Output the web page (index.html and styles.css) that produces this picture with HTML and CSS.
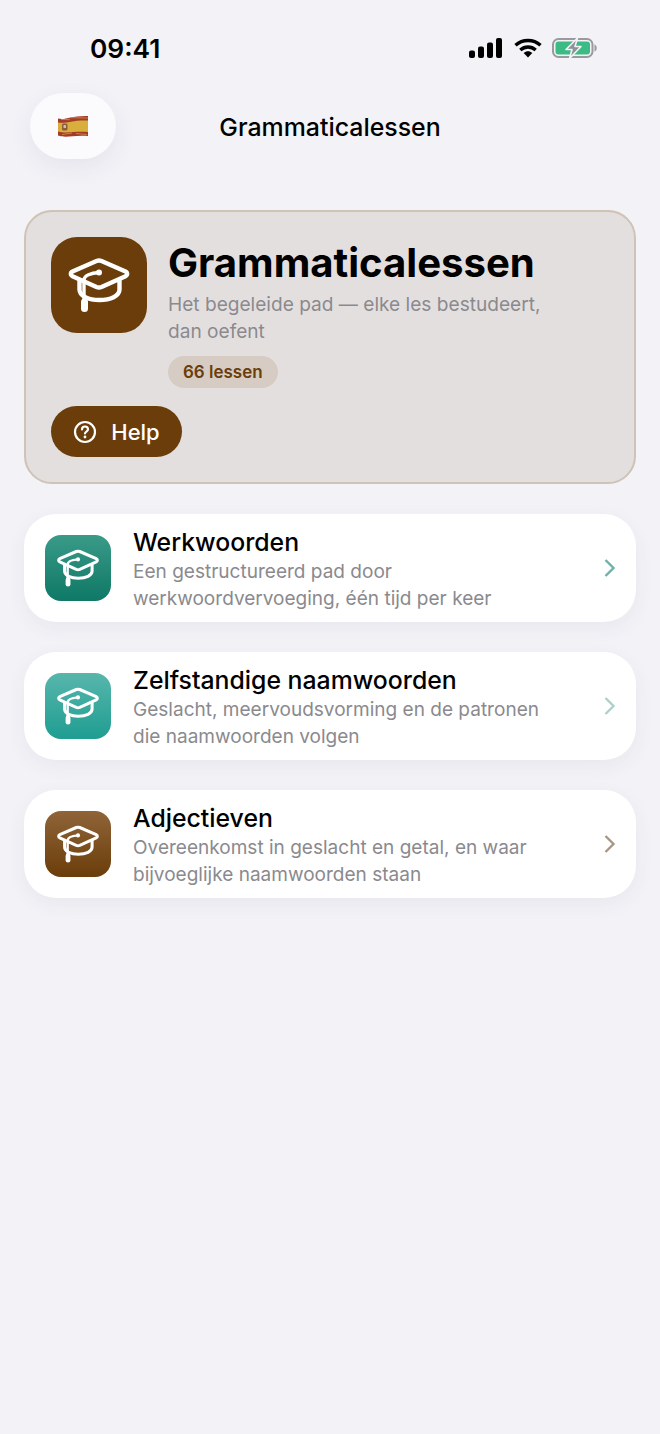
FILE: index.html
```html
<!DOCTYPE html>
<html lang="nl">
<head>
<meta charset="utf-8">
<title>Grammaticalessen</title>
<link rel="stylesheet" href="styles.css">
</head>
<body>
<svg class="defs" width="0" height="0" aria-hidden="true">
  <symbol id="cap" viewBox="0 0 96 96">
    <path d="M45.500 24 21.500 34.500c-2.200 1-2.200 3.700 0 4.700L45.500 50c1.700.7 3.300.7 5 0l24-10.800c2.200-1 2.200-3.700 0-4.700L50.500 24c-1.700-.7-3.300-.7-5 0Z" fill="none" stroke="#fff" stroke-width="4.400" stroke-linejoin="round"/>
    <path d="M28.500 43v9.500c0 6.500 9 10.500 20 10.500s20-4 20-10.500V43" fill="none" stroke="#fff" stroke-width="4.400" stroke-linecap="round"/>
    <path d="M48 35.500c-8 .5-15 3-15 7.500v22" fill="none" stroke="#fff" stroke-width="3.400" stroke-linecap="round"/>
    <circle cx="48" cy="35.500" r="3" fill="#fff"/>
    <path d="M33.500 65v6.500" stroke="#fff" stroke-width="7" stroke-linecap="round"/>
  </symbol>
</svg>

<div class="status">
  <span class="time">09:41</span>
  <div class="status-icons">
    <svg class="sig" width="34" height="20" viewBox="0 0 34 20"><rect x="0" y="12.500" width="6" height="7.500" rx="2"/><rect x="9" y="8.500" width="6" height="11.500" rx="2"/><rect x="18" y="4.500" width="6" height="15.500" rx="2"/><rect x="27" y="0" width="6" height="20" rx="2"/></svg>
    <svg class="wifi" width="28" height="20" viewBox="0 0 28 20"><path d="M1.500 7.300C8.500.9 19.500.9 26.500 7.300" fill="none" stroke="#000" stroke-width="3.400"/><path d="M6.300 12c4.600-4 10.800-4 15.400 0" fill="none" stroke="#000" stroke-width="3.400"/><path d="M9.700 15c2.800-2.200 5.800-2.200 8.600 0L14 19.500Z" fill="#000"/></svg>
    <svg class="batt" width="45" height="22" viewBox="0 0 45 22"><rect x="1" y="2" width="39.500" height="18" rx="5.500" fill="none" stroke="#9a9a9e" stroke-width="2"/><rect x="3.500" y="4.500" width="34.500" height="13" rx="3" fill="#3dbb84"/><path d="M42.500 7.500c1.500.5 2.200 2 2.200 3.500s-.7 3-2.200 3.500Z" fill="#9a9a9e"/><path d="M25.500 1 14 12.500h6L17.500 21.500 29 9.500h-6Z" fill="#8f9298" stroke="#f2f2f7" stroke-width="1.600" stroke-linejoin="round"/></svg>
  </div>
</div>

<header class="nav">
  <button class="flag-btn" aria-label="Spaans">
    <svg width="30" height="22" viewBox="0 0 30 22">
      <path d="M0 3.500C8 5.500 12 .5 30 1v20C16 19.500 9 23.500 0 20.500Z" fill="#a33b26"/>
      <path d="M0 7.500C8 9 13 5 30 5.500v11.500C16 16 9 19 0 16.500Z" fill="#d8ae3c"/>
      <path d="M12 2.700 30 3M3 4.500l9 .2M4 19.500l10-1.500M18 18.500l11 1" stroke="#c98a4a" stroke-width=".9" fill="none"/>
      <rect x="4" y="8.500" width="5.500" height="7" rx="1.500" fill="#8d5a3c"/>
      <rect x="5.500" y="10" width="2.500" height="3" fill="#c4c0b8"/>
    </svg>
  </button>
  <h1 class="nav-title">Grammaticalessen</h1>
</header>

<section class="hero">
  <div class="hero-top">
    <div class="hero-icon"><svg width="96" height="96"><use href="#cap"/></svg></div>
    <div class="hero-text">
      <h2 class="hero-title">Grammaticalessen</h2>
      <p class="hero-sub">Het begeleide pad — elke les bestudeert, dan oefent</p>
      <span class="badge">66 lessen</span>
    </div>
  </div>
  <button class="help">
    <svg width="24" height="24" viewBox="0 0 24 24"><circle cx="12" cy="12" r="10" fill="none" stroke="#fff" stroke-width="2.200"/><path d="M9 9.500c0-1.800 1.300-3 3-3s3 1.200 3 2.800c0 2.200-3 2.300-3 4.200" fill="none" stroke="#fff" stroke-width="2.200" stroke-linecap="round"/><circle cx="12" cy="17" r="1.400" fill="#fff"/></svg>
    <span>Help</span>
  </button>
</section>

<main class="list">
  <article class="row">
    <div class="row-icon teal"><svg width="66" height="66"><use href="#cap"/></svg></div>
    <div class="row-text">
      <h3 class="row-title">Werkwoorden</h3>
      <p class="row-sub">Een gestructureerd pad door werkwoordvervoeging, één tijd per keer</p>
    </div>
    <svg class="chev" width="12" height="20" viewBox="0 0 12 20"><path d="M1.500 2l8 8-8 8" fill="none" stroke="#6fb0a8" stroke-width="2.400"/></svg>
  </article>
  <article class="row">
    <div class="row-icon aqua"><svg width="66" height="66"><use href="#cap"/></svg></div>
    <div class="row-text">
      <h3 class="row-title">Zelfstandige naamwoorden</h3>
      <p class="row-sub">Geslacht, meervoudsvorming en de patronen die naamwoorden volgen</p>
    </div>
    <svg class="chev" width="12" height="20" viewBox="0 0 12 20"><path d="M1.500 2l8 8-8 8" fill="none" stroke="#aed0ca" stroke-width="2.400"/></svg>
  </article>
  <article class="row">
    <div class="row-icon brown"><svg width="66" height="66"><use href="#cap"/></svg></div>
    <div class="row-text">
      <h3 class="row-title">Adjectieven</h3>
      <p class="row-sub">Overeenkomst in geslacht en getal, en waar bijvoeglijke naamwoorden staan</p>
    </div>
    <svg class="chev" width="12" height="20" viewBox="0 0 12 20"><path d="M1.500 2l8 8-8 8" fill="none" stroke="#a99684" stroke-width="2.400"/></svg>
  </article>
</main>
</body>
</html>
```
FILE: styles.css
```css
* { box-sizing: border-box; }
html, body { margin: 0; padding: 0; }
body {
  width: 660px;
  height: 1434px;
  overflow: hidden;
  background: #f2f2f7;
  font-family: Inter, "Liberation Sans", sans-serif;
  color: #000;
}
.defs { position: absolute; }
h1, h2, h3, p { margin: 0; }

.status {
  height: 93px;
  padding: 33px 63px 0 90px;
  display: flex;
  justify-content: space-between;
  align-items: flex-start;
}
.time { font-size: 26.300px; font-weight: 600; line-height: 31px; }
.status-icons { display: flex; align-items: center; gap: 10px; padding-top: 4px; }
.sig { margin-right: 1px; }

.nav {
  height: 66px;
  padding-left: 30px;
  display: grid;
  grid-template-columns: 86px 1fr;
  position: relative;
  align-items: center;
}
.flag-btn {
  width: 86px;
  height: 66px;
  border: 0;
  padding: 0;
  border-radius: 33px;
  background: #fbfbfe;
  box-shadow: 0 8px 24px rgba(60, 60, 80, .07);
  display: flex;
  align-items: center;
  justify-content: center;
}
.nav-title {
  position: absolute;
  left: 0;
  right: 0;
  top: 19px;
  text-align: center;
  font-size: 24.900px;
  font-weight: 500;
  line-height: 30px;
}

.hero {
  margin: 51px 24px 0;
  height: 274px;
  padding: 25px;
  border: 2px solid #cfc2b6;
  border-radius: 28px;
  background: #e4dfdf;
  display: flex;
  flex-direction: column;
  gap: 18px;
}
.hero-top { display: flex; gap: 21px; }
.hero-icon {
  width: 96px;
  height: 96px;
  flex: none;
  border-radius: 26px;
  background: #6b3d0a;
}
.hero-text { flex: 1; min-width: 0; padding-top: 1px; }
.hero-title { font-size: 40.100px; font-weight: 700; line-height: 50px; margin-bottom: 3px; }
.hero-sub { font-size: 19.100px; line-height: 27px; color: #8a8a8e; width: 390px; }
.badge {
  display: inline-block;
  margin-top: 11px;
  height: 32px;
  padding: 0 15px;
  border-radius: 16px;
  background: #d6ccc3;
  color: #6b3d0a;
  font-size: 17px;
  font-weight: 600;
  line-height: 32px;
}
.help {
  align-self: flex-start;
  width: 131px;
  height: 51px;
  border: 0;
  border-radius: 25.500px;
  background: #6b3d0a;
  color: #fff;
  font: 500 22px Inter, "Liberation Sans", sans-serif;
  display: flex;
  align-items: center;
  justify-content: center;
  gap: 14px;
  padding: 0;
}

.list {
  margin: 30px 24px 0;
  display: flex;
  flex-direction: column;
  gap: 30px;
}
.row {
  height: 108px;
  padding: 0 20px 0 21px;
  border-radius: 32px;
  background: #fff;
  box-shadow: 0 6px 20px rgba(60, 60, 90, .06);
  display: flex;
  align-items: center;
  gap: 22px;
}
.row-icon {
  width: 66px;
  height: 66px;
  flex: none;
  border-radius: 16px;
}
.teal { background: linear-gradient(#3a9a88, #0f7866); }
.aqua { background: linear-gradient(#58b6ac, #1f9d91); }
.brown { background: linear-gradient(#8f6438, #6b3d0a); }
.row-text { flex: 1; min-width: 0; padding-top: 4px; }
.row-title { font-size: 24.800px; font-weight: 500; line-height: 28px; }
.row-sub { font-size: 19.050px; line-height: 27px; color: #8a8a8e; margin-top: 2px; width: 420px; }
.chev { flex: none; }
```
